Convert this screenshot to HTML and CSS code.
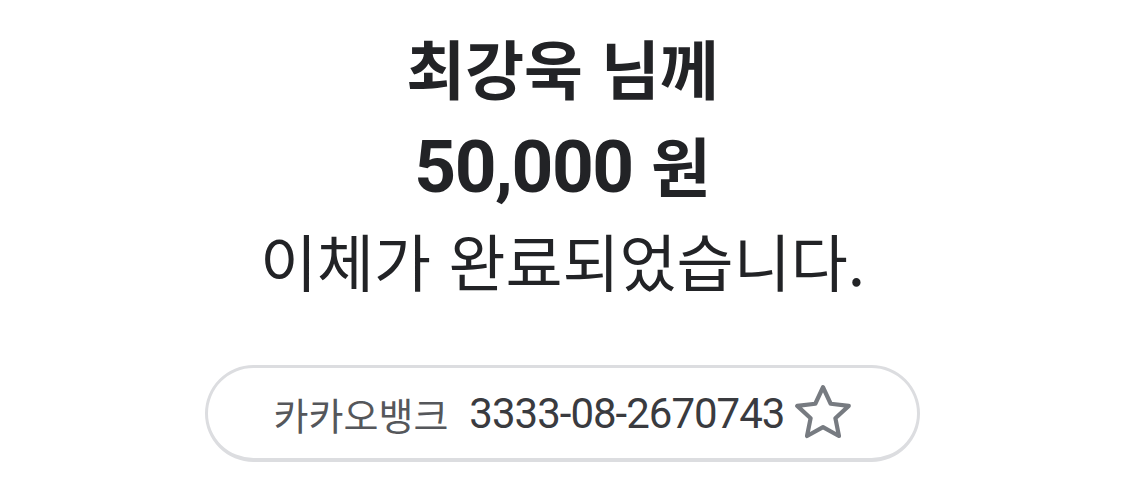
FILE: index.html
```html
<!DOCTYPE html>
<html lang="ko">
<head>
    <meta charset="UTF-8">
    <meta name="viewport" content="width=device-width, initial-scale=1.0">
    <title>이체 완료</title>
    <link rel="stylesheet" href="styles.css">
</head>
<body>
    <div class="result">
        <div class="receiver">최강욱 님께</div>
        <div class="amount"><span class="num">50,000</span> 원</div>
        <div class="message">이체가 완료되었습니다.</div>

        <!-- 받는 계좌 -->
        <div class="account">
            <span class="bank">카카오뱅크</span>
            <span class="account-no">3333-08-2670743</span>
            <svg class="star" width="56" height="56" viewBox="2 2 20 20">
                <path d="M12 2.8l2.75 5.9 6.45.75-4.78 4.4 1.28 6.37L12 17.05l-5.7 3.17 1.28-6.37-4.78-4.4 6.45-.75z"
                      fill="none" stroke="#777b81" stroke-width="1.5" stroke-linejoin="round"/>
            </svg>
        </div>
    </div>
</body>
</html>
```

FILE: styles.css
```css
:root {
    --text-color: #222326;
    --sub-color: #55575b;
    --border-color: #dcdde0;
}

body {
    margin: 0;
    background: #fff;
    color: var(--text-color);
    font-family: 'Noto Sans CJK KR', 'Noto Sans', sans-serif;
}

.result {
    display: flex;
    flex-direction: column;
    align-items: center;
    padding-top: 21px;
}

.receiver {
    font-size: 64px;
    font-weight: bold;
    line-height: 90px;
}

.amount {
    font-size: 65px;
    font-weight: bold;
    line-height: 107px;
}

.amount .num {
    font-family: Roboto, 'Noto Sans CJK KR', sans-serif;
    font-size: 73px;
    letter-spacing: -1.5px;
}

.message {
    font-size: 62px;
    line-height: 79px;
}

.account {
    box-sizing: border-box;
    margin-top: 65px;
    width: 715px;
    height: 97px;
    border: 3px solid var(--border-color);
    border-bottom-width: 4px;
    border-radius: 50px;
    display: flex;
    align-items: center;
    justify-content: center;
    gap: 9px;
}

.bank {
    font-size: 38px;
    color: var(--sub-color);
    margin-right: 12px;
}

.account-no {
    font-family: Roboto, sans-serif;
    font-size: 42px;
    letter-spacing: -1px;
    color: #3a3b3f;
}

.star {
    margin-left: 2px;
}
```
